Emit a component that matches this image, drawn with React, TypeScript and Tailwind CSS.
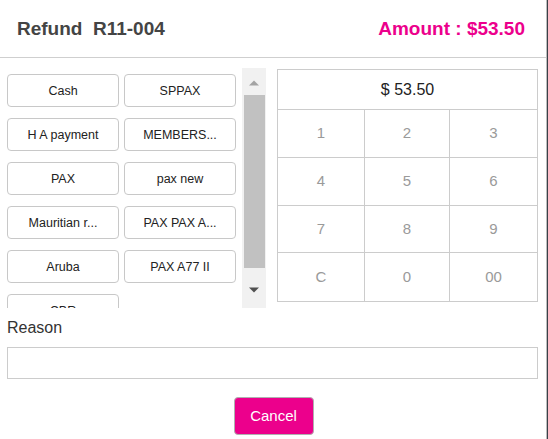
import React from "react";

const methods = [
  ["Cash", "SPPAX"],
  ["H A payment", "MEMBERS..."],
  ["PAX", "pax new"],
  ["Mauritian r...", "PAX PAX A..."],
  ["Aruba", "PAX A77 II"],
  ["CBR", null],
];

const keys = ["1", "2", "3", "4", "5", "6", "7", "8", "9", "C", "0", "00"];

export default function App() {
  return (
    <div
      className="w-[548px] h-[439px] bg-[#3a4048] overflow-hidden"
      style={{ fontFamily: '"Liberation Sans", Arial, sans-serif' }}
    >
      <div className="w-[547px] h-[439px] bg-white border-r border-[#bdbdbd] flex flex-col">
        <div className="h-[58px] shrink-0 border-b border-[#cfcfcf] flex items-center justify-between pl-[17px] pr-[21px] pt-[1px]">
          <div className="text-[19px] font-bold text-[#444] whitespace-pre">Refund  R11-004</div>
          <div className="text-[19px] font-bold text-[#ec008c]">Amount : $53.50</div>
        </div>
        <div className="flex pt-[10px] h-[250px] shrink-0">
          <div className="w-[266px] h-[240px] flex overflow-hidden">
            <div className="flex-1 pl-[7px] pt-[6px] flex flex-col gap-[11px]">
              {methods.map((row, i) => (
                <div key={i} className="flex gap-[5px] shrink-0">
                  {row.map((m, j) =>
                    m ? (
                      <div
                        key={j}
                        className="w-[112px] h-[33px] border border-[#c8c8c8] rounded-[4px] flex items-center justify-center text-[12.5px] text-[#222] pt-[1px]"
                      >
                        {m}
                      </div>
                    ) : null
                  )}
                </div>
              ))}
            </div>
            <div className="w-[24px] h-[240px] bg-[#f1f1f1] flex flex-col items-center shrink-0">
              <div className="h-[27px] flex items-center justify-center pt-[2px]">
                <svg width="12" height="8" viewBox="0 0 12 8">
                  <path d="M1 6.5 L6 1.5 L11 6.5 Z" fill="#a3a3a3" />
                </svg>
              </div>
              <div className="w-[21px] h-[173px] bg-[#c1c1c1]" />
              <div className="flex-1 flex items-center justify-center pt-[3px]">
                <svg width="12" height="8" viewBox="0 0 12 8">
                  <path d="M1 1.5 L6 6.5 L11 1.5 Z" fill="#505050" />
                </svg>
              </div>
            </div>
          </div>
          <div className="ml-[11px] mt-[1px] w-[261px] h-[233px] border border-[#cccccc] flex flex-col">
            <div className="h-[40px] border-b border-[#cccccc] flex items-center justify-center text-[16px] text-[#222]">
              $ 53.50
            </div>
            <div className="grid grid-cols-[87px_85px_1fr] grid-rows-4 flex-1">
              {keys.map((k, i) => (
                <div
                  key={k}
                  className={`flex items-center justify-center text-[15px] text-[#9a9a9a] ${
                    i % 3 !== 2 ? "border-r border-[#cccccc]" : ""
                  } ${i < 9 ? "border-b border-[#cccccc]" : ""}`}
                >
                  {k}
                </div>
              ))}
            </div>
          </div>
        </div>
        <div className="pl-[7px] pt-[10px] text-[16px] text-[#333] leading-[20px]">Reason</div>
        <div className="ml-[7px] mt-[9px] w-[531px] h-[32px] border border-[#cccccc]" />
        <div className="flex justify-center pt-[18px] pl-[1px]">
          <div className="w-[80px] h-[38px] bg-[#ec008c] border border-[#b0b0b0] rounded-[4px] flex items-center justify-center text-white text-[15px]">
            Cancel
          </div>
        </div>
      </div>
    </div>
  );
}
